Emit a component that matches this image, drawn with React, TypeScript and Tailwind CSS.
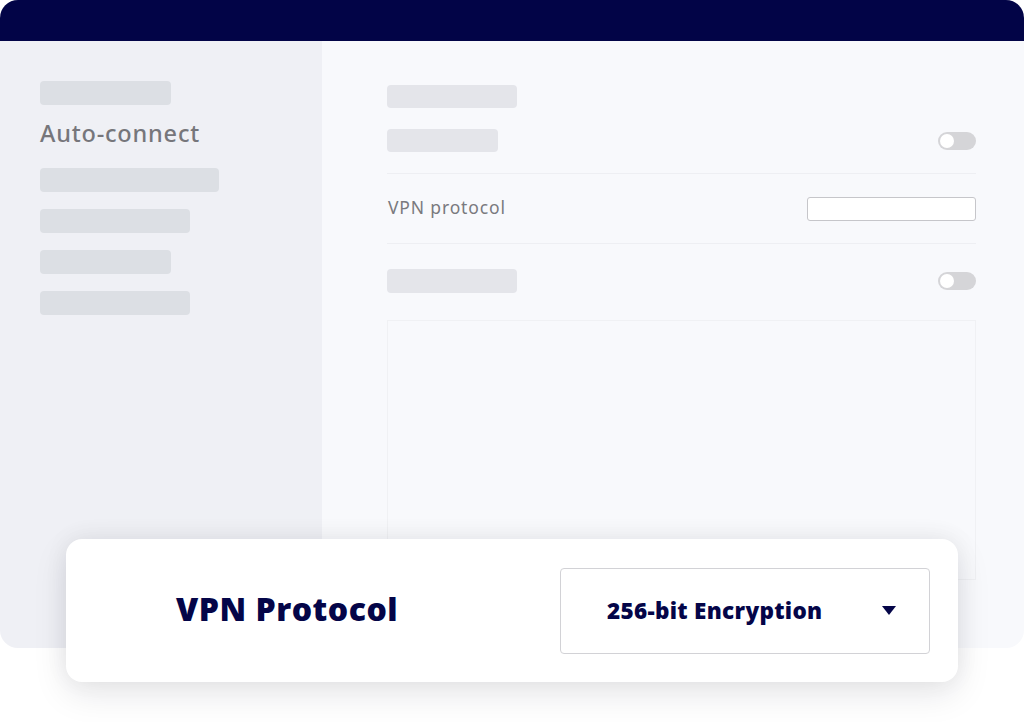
import React from "react";

const Bar = ({ w, tone = "side" }: { w: string; tone?: "side" | "main" }) => (
  <div className={`${w} h-[24px] rounded-[4px] ${tone === "side" ? "bg-[#dcdfe4]" : "bg-[#e4e5ea]"}`} />
);

const Toggle = () => (
  <div className="w-[38px] h-[18px] rounded-full bg-[#d5d5d8] flex items-center px-[2px]">
    <div className="w-[14px] h-[14px] rounded-full bg-white" />
  </div>
);

export default function App() {
  return (
    <div className="relative w-[1024px] h-[722px] bg-white overflow-hidden" style={{ fontFamily: "'Noto Sans', sans-serif" }}>
      <div className="w-[1024px] h-[648px] rounded-[18px] overflow-hidden flex flex-col">
        <div className="h-[41px] bg-[#020447] shrink-0" />
        <div className="flex flex-1">
          <div className="w-[322px] bg-[#eff0f5] pl-[40px] pt-[40px] flex flex-col">
            <Bar w="w-[131px]" />
            <div className="mt-[13px] text-[23.5px] leading-[30px] text-[#76767b] font-medium tracking-[0.8px]">
              Auto-connect
            </div>
            <div className="mt-[20px] flex flex-col gap-[17px]">
              <Bar w="w-[179px]" />
              <Bar w="w-[150px]" />
              <Bar w="w-[131px]" />
              <Bar w="w-[150px]" />
            </div>
          </div>
          <div className="flex-1 bg-[#f8f9fc] pl-[65px] pr-[48px] pt-[44px] flex flex-col">
            <div className="w-[130px] h-[23px] rounded-[4px] bg-[#e4e5ea]" />
            <div className="mt-[21px] flex items-center justify-between h-[23px]">
              <div className="w-[111px] h-[23px] rounded-[4px] bg-[#e4e5ea]" />
              <Toggle />
            </div>
            <div className="mt-[21px] h-px bg-[#eeeff3]" />
            <div className="h-[69px] flex items-center justify-between">
              <span className="text-[17.5px] text-[#7a7a7e] pl-[1px] tracking-[0.85px] -mt-[3px]">VPN protocol</span>
              <div className="w-[169px] h-[24px] rounded-[3px] border border-[#c6c6ca] bg-white" />
            </div>
            <div className="h-px bg-[#eeeff3]" />
            <div className="mt-[25px] flex items-center justify-between h-[24px]">
              <div className="w-[130px] h-[24px] rounded-[4px] bg-[#e4e5ea]" />
              <Toggle />
            </div>
            <div className="mt-[27px] h-[260px] border border-[#f0f1f4] bg-[#f8f9fc]" />
          </div>
        </div>
      </div>
      <div className="absolute left-[66px] top-[539px] w-[892px] h-[143px] bg-white rounded-[16px] shadow-[0_12px_34px_rgba(20,20,40,0.10),0_-2px_24px_rgba(20,20,40,0.06)] flex items-center justify-between pl-[110px] pr-[28px]">
        <span className="text-[32px] font-extrabold text-[#040548] tracking-[0.5px] -mt-[4px]" style={{ fontFamily: "'Open Sans', sans-serif" }}>VPN Protocol</span>
        <div className="w-[370px] h-[86px] rounded-[4px] border border-[#d2d2d6] flex items-center justify-between pl-[46px] pr-[33px]">
          <span className="text-[22.5px] font-extrabold text-[#040548] tracking-[0.3px]" style={{ fontFamily: "'Open Sans', sans-serif" }}>256-bit Encryption</span>
          <svg width="14" height="10" viewBox="0 0 14 10"><path d="M0 0 L14 0 L7 9 Z" fill="#040548" /></svg>
        </div>
      </div>
    </div>
  );
}
